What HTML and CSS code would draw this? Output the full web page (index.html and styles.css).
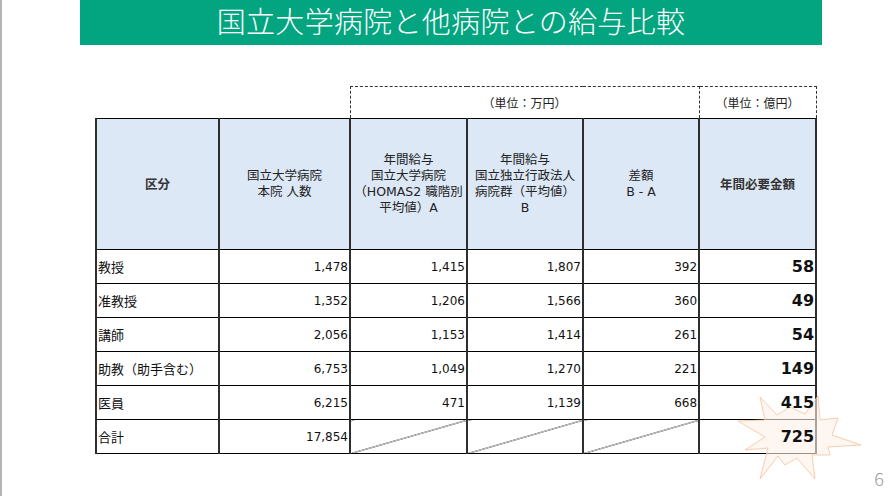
FILE: index.html
```html
<!DOCTYPE html>
<html lang="ja">
<head>
<meta charset="utf-8">
<link rel="stylesheet" href="styles.css">
</head>
<body>
<div class="slide">
  <div class="title-bar"><span class="title-text">国立大学病院と他病院との給与比較</span></div>
  <table class="cmp">
    <colgroup>
      <col class="c1"><col class="c2"><col class="c3"><col class="c4"><col class="c5"><col class="c6">
    </colgroup>
    <thead>
      <tr class="unit-row">
        <td class="blank"></td>
        <td class="blank"></td>
        <td class="unit" colspan="3">（単位：万円）</td>
        <td class="unit">（単位：億円）</td>
      </tr>
      <tr class="head-row">
        <th>区分</th>
        <th>国立大学病院<br>本院 人数</th>
        <th>年間給与<br>国立大学病院<br>（HOMAS2 職階別<br>平均値）A</th>
        <th>年間給与<br>国立独立行政法人<br>病院群（平均値）<br>B</th>
        <th>差額<br>B - A</th>
        <th>年間必要金額</th>
      </tr>
    </thead>
    <tbody>
      <tr><td class="lbl">教授</td><td class="num">1,478</td><td class="num">1,415</td><td class="num">1,807</td><td class="num">392</td><td class="big"><span>58</span></td></tr>
      <tr><td class="lbl">准教授</td><td class="num">1,352</td><td class="num">1,206</td><td class="num">1,566</td><td class="num">360</td><td class="big"><span>49</span></td></tr>
      <tr><td class="lbl">講師</td><td class="num">2,056</td><td class="num">1,153</td><td class="num">1,414</td><td class="num">261</td><td class="big"><span>54</span></td></tr>
      <tr><td class="lbl">助教（助手含む）</td><td class="num">6,753</td><td class="num">1,049</td><td class="num">1,270</td><td class="num">221</td><td class="big"><span>149</span></td></tr>
      <tr><td class="lbl">医員</td><td class="num">6,215</td><td class="num">471</td><td class="num">1,139</td><td class="num">668</td><td class="big"><span>415</span></td></tr>
      <tr><td class="lbl">合計</td><td class="num">17,854</td><td class="diag"></td><td class="diag"></td><td class="diag"></td><td class="big"><span>725</span></td></tr>
    </tbody>
  </table>
  <svg class="burst" width="126" height="86" viewBox="0 0 126 86">
    <polygon points="1,26 28,25 23,2 40,20 53,12 68,19 81,1 83,25 101,23 95,40 124,50 91,52 93,60 75,60 78,84 60,63 48,70 41,61 23,84 31,53 8,55 28,42" />
  </svg>
  <div class="page-no">6</div>
</div>
</body>
</html>
```
FILE: styles.css
```css
html, body {
  margin: 0;
  padding: 0;
  background: #ffffff;
}

.slide {
  position: relative;
  width: 891px;
  height: 496px;
  border-left: 2px solid #b4b4b4;
  font-family: "DejaVu Sans", "Noto Sans CJK JP", sans-serif;
  color: #111;
  overflow: hidden;
}

.slide::before {
  content: "";
  position: absolute;
  left: -2px;
  top: 178px;
  width: 2px;
  height: 152px;
  background: #3aa68a;
}

.title-bar {
  margin-left: 78px;
  width: 742px;
  height: 45px;
  background: #03a580;
  color: #ffffff;
  display: flex;
  justify-content: center;
  align-items: flex-start;
  box-sizing: border-box;
}

.title-text {
  font-family: "Noto Sans CJK JP", sans-serif;
  font-weight: 300;
  font-size: 29px;
  line-height: 38px;
  letter-spacing: 0.3px;
  padding-top: 1px;
}

.cmp {
  margin-top: 41px;
  margin-left: 93px;
  width: 721px;
  border-collapse: collapse;
  table-layout: fixed;
}

.c1 { width: 123px; }
.c2 { width: 131px; }
.c3 { width: 117px; }
.c4 { width: 116px; }
.c5 { width: 116px; }
.c6 { width: 117px; }

.cmp td, .cmp th {
  padding: 0;
  border-top: 1px solid #000;
  border-bottom: 1px solid #000;
  border-left: 2px solid #2e2e2e;
  border-right: 2px solid #2e2e2e;
}

.unit-row td {
  height: 31px;
  font-family: "Noto Sans CJK JP", sans-serif;
  font-size: 12px;
  text-align: center;
  vertical-align: middle;
  color: #222;
}

.unit-row td.blank {
  border: none;
}

.unit-row td.unit {
  border: 1px dashed #333;
}

.head-row th {
  height: 130px;
  background: #dce8f6;
  font-weight: normal;
  font-size: 12.5px;
  line-height: 16px;
  color: #222;
  text-align: center;
  vertical-align: middle;
  white-space: nowrap;
  overflow: visible;
}

.head-row th:first-child,
.head-row th:last-child {
  font-weight: bold;
  font-family: "Noto Sans CJK JP", sans-serif;
  font-size: 12.5px;
  color: #333;
}

.cmp tbody td {
  height: 33px;
  vertical-align: middle;
}

.cmp td.lbl {
  font-family: "Noto Sans CJK JP", sans-serif;
  font-size: 13px;
  padding-left: 1px;
  text-align: left;
  white-space: nowrap;
}

.cmp td.num {
  font-size: 12px;
  text-align: right;
  padding-right: 1px;
}

.cmp td.big {
  font-size: 16px;
  font-weight: bold;
  text-align: right;
  padding-right: 1px;
}

.cmp td.big span {
  position: relative;
  z-index: 2;
}

.cmp td.diag {
  background: linear-gradient(to bottom right,
    transparent calc(50% - 0.7px),
    #333 50%,
    transparent calc(50% + 0.7px));
}

.burst {
  position: absolute;
  left: 735px;
  top: 395px;
  z-index: 1;
}

.burst polygon {
  fill: rgba(253, 241, 231, 0.6);
  stroke: rgba(245, 200, 166, 0.9);
  stroke-width: 1;
  stroke-linejoin: miter;
}

.page-no {
  margin-top: 11px;
  padding-right: 9px;
  text-align: right;
  font-family: "Noto Sans CJK JP", sans-serif;
  font-weight: 300;
  font-size: 18px;
  color: #9a9a9a;
}
```
